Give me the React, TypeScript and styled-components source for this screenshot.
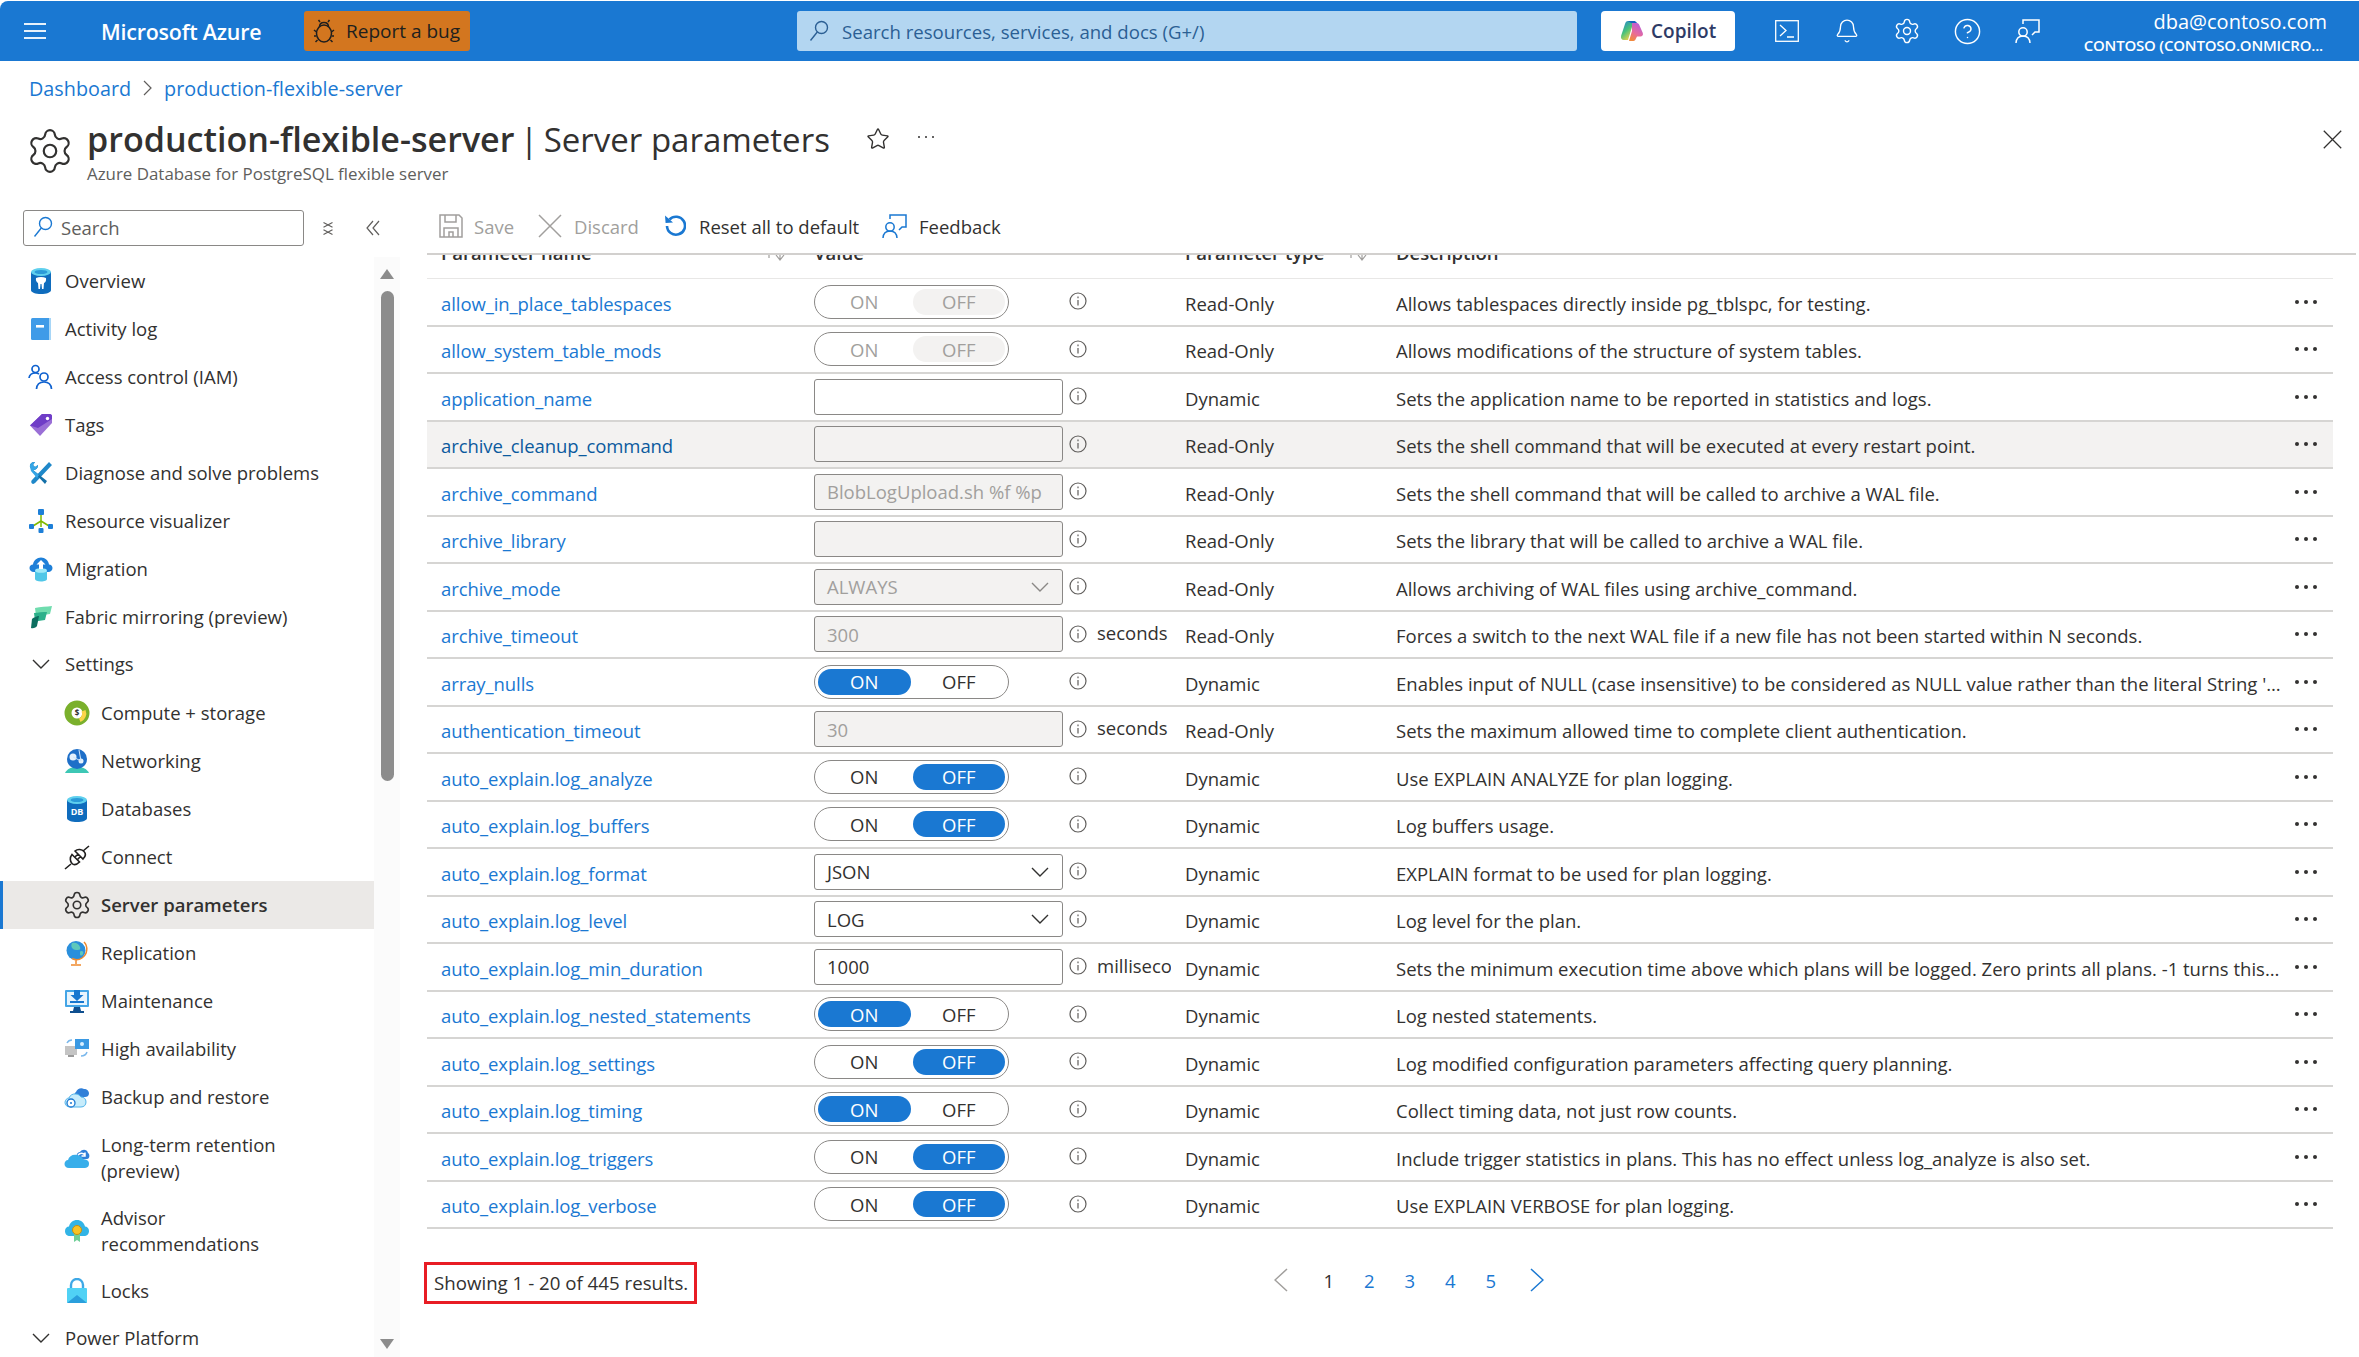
import React from "react";
import styled, { createGlobalStyle } from "styled-components";
import { Bell, CircleHelp, Settings, Star } from "lucide-react";

const FONT = `"Open Sans", "Noto Sans", sans-serif`;
const BLUE = "#1a78d2";

const GlobalStyle = createGlobalStyle`
  html, body { margin: 0; padding: 0; background: #fff; }
  body { font-family: ${FONT}; color: #323130; font-size: 18.5px; }
  * { box-sizing: border-box; }
`;

const Page = styled.div`
  width: 2359px;
  height: 1357px;
  overflow: hidden;
  display: flex;
  flex-direction: column;
  padding-top: 1px;
`;

/* top bar */
const TopBar = styled.header`
  height: 60px;
  flex: none;
  background: ${BLUE};
  border-top-left-radius: 8px;
  display: flex;
  align-items: center;
  color: #fff;
`;
const Hamburger = styled.div`
  width: 22px;
  margin-left: 24px;
  display: flex;
  flex-direction: column;
  gap: 5px;
  span { display: block; height: 2px; background: #fff; opacity: .9; }
`;
const Brand = styled.div`
  margin-left: 55px;
  width: 203px;
  font-size: 21.4px;
  font-weight: 600;
  letter-spacing: -0.2px;
`;
const BugButton = styled.div`
  width: 166px;
  height: 40px;
  background: #d3761f;
  border-radius: 3px;
  color: #201f1e;
  display: flex;
  align-items: center;
  gap: 11px;
  padding-left: 9px;
  font-size: 19px;
`;
const GlobalSearch = styled.div`
  margin-left: 327px;
  width: 780px;
  height: 40px;
  background: #b3d6f1;
  border-radius: 3px;
  display: flex;
  align-items: center;
  gap: 13px;
  padding-left: 12px;
  color: #2b5f94;
  font-size: 18.6px;
`;
const CopilotButton = styled.div`
  margin-left: 24px;
  width: 134px;
  height: 40px;
  border-radius: 4px;
  background: #fff;
  color: #2e3b66;
  display: flex;
  align-items: center;
  gap: 7px;
  padding-left: 19px;
  font-size: 19px;
  font-weight: 600;
`;
const TopIcons = styled.div`
  margin-left: 22px;
  display: flex;
  align-items: center;
`;
const TopIconCell = styled.div`
  width: 60px;
  display: flex;
  justify-content: center;
  svg { display: block; }
`;
const UserBox = styled.div`
  margin-left: auto;
  margin-right: 32px;
  padding-top: 2px;
  text-align: right;
  display: flex;
  flex-direction: column;
  gap: 1px;
`;
const UserMail = styled.div`
  font-size: 20px;
  line-height: 25px;
`;
const UserTenant = styled.div`
  font-size: 15px;
  font-weight: 600;
  line-height: 20px;
  letter-spacing: -0.2px;
  margin-right: 4px;
`;

/* breadcrumb + title */
const Breadcrumb = styled.nav`
  height: 54px;
  flex: none;
  display: flex;
  align-items: center;
  padding-left: 29px;
  color: ${BLUE};
  font-size: 19.8px;
  gap: 12px;
`;
const TitleRow = styled.div`
  height: 85px;
  flex: none;
  display: flex;
  padding-left: 25px;
  padding-top: 4px;
`;
const TitleGear = styled.div`
  margin-top: 7px;
  flex: none;
  svg { display: block; }
`;
const TitleBlock = styled.div`
  margin-left: 12px;
  display: flex;
  flex-direction: column;
`;
const TitleLine = styled.div`
  display: flex;
  align-items: center;
  height: 40px;
`;
const Title = styled.h1`
  margin: 0;
  font-size: 33px;
  font-weight: 400;
  line-height: 40px;
  color: #323130;
  word-spacing: -3px;
  b { font-weight: 600; font-size: 34.1px; word-spacing: 0; }
  span { word-spacing: 0; }
`;
const TitleStar = styled.span`
  margin-left: 36px;
  svg { display: block; }
`;
const TitleDots = styled.span`
  margin-left: 27px;
  margin-bottom: 4px;
  svg { display: block; }
`;
const Subtitle = styled.div`
  font-size: 16.900px;
  line-height: 24px;
  margin-top: 3px;
  color: #605e5c;
`;
const CloseIcon = styled.div`
  margin-left: auto;
  margin-right: 17px;
  margin-top: 10px;
`;

/* body */
const Body = styled.div`
  flex: 1;
  min-height: 0;
  display: flex;
`;
const Sidebar = styled.aside`
  width: 400px;
  flex: none;
  display: flex;
  flex-direction: column;
  padding-top: 10px;
`;
const SideSearchRow = styled.div`
  display: flex;
  align-items: center;
  padding-left: 23px;
  height: 36px;
  margin-bottom: 11px;
`;
const SideSearch = styled.div`
  width: 281px;
  height: 36px;
  border: 1px solid #8a8886;
  border-radius: 3px;
  display: flex;
  align-items: center;
  gap: 8px;
  padding-left: 9px;
  padding-bottom: 2px;
  color: #605e5c;
`;
const ClearMark = styled.span`
  margin-left: 19px;
  svg { display: block; }
`;
const CollapseMark = styled.span`
  margin-left: 33px;
  svg { display: block; }
`;
const SideColumns = styled.div`
  flex: 1;
  min-height: 0;
  display: flex;
`;
const NavList = styled.ul`
  list-style: none;
  margin: 0;
  padding: 0;
  width: 374px;
  flex: none;
`;
const NavItem = styled.li<{ $sub?: boolean; $active?: boolean; $tall?: boolean }>`
  min-height: ${(p) => (p.$tall ? 73 : 48)}px;
  display: flex;
  align-items: center;
  padding-left: ${(p) => (p.$sub ? 62 : 26)}px;
  background: ${(p) => (p.$active ? "#ebe9e7" : "transparent")};
  box-shadow: ${(p) => (p.$active ? `inset 3px 0 0 ${BLUE}` : "none")};
  font-weight: ${(p) => (p.$active ? 600 : 400)};
  line-height: 26px;
`;
const NavHead = styled(NavItem)`
  padding-bottom: 3px;
`;
const NavIcon = styled.span`
  width: 30px;
  height: 30px;
  flex: none;
  display: flex;
  align-items: center;
  justify-content: center;
  margin-right: 9px;
  svg { display: block; }
`;
const NavLabel = styled.span<{ $wrap?: boolean }>`
  max-width: ${(p) => (p.$wrap ? "210px" : "none")};
`;
const ScrollRail = styled.div`
  width: 26px;
  flex: none;
  background: #fbfbfb;
  display: flex;
  flex-direction: column;
  align-items: center;
  padding-top: 12px;
`;
const ScrollThumb = styled.div`
  width: 13px;
  height: 490px;
  margin-top: 12px;
  background: #8c8c8c;
  border-radius: 7px;
`;
const Arrow = styled.div<{ $down?: boolean }>`
  width: 0;
  height: 0;
  border-left: 7px solid transparent;
  border-right: 7px solid transparent;
  ${(p) => (p.$down ? "border-top: 10px solid #8c8c8c; margin-top: 558px;" : "border-bottom: 10px solid #8c8c8c;")}
`;

const Main = styled.main`
  flex: 1;
  min-width: 0;
  padding-left: 24px;
  display: flex;
  flex-direction: column;
`;
const Toolbar = styled.div`
  height: 55px;
  flex: none;
  margin: 0 3px;
  border-bottom: 2px solid #d2d0ce;
  display: flex;
  align-items: center;
  padding-left: 12px;
  padding-bottom: 1px;
`;
const ToolButton = styled.div<{ $disabled?: boolean; $gap: number; $width: number }>`
  display: flex;
  align-items: center;
  gap: ${(p) => p.$gap}px;
  width: ${(p) => p.$width}px;
  color: ${(p) => (p.$disabled ? "#a19f9d" : "#323130")};
  svg { display: block; flex: none; }
`;
const TableClip = styled.div`
  overflow: hidden;
  margin-left: 3px;
  width: 1906px;
  flex: none;
`;
const Row = styled.div<{ $hover?: boolean }>`
  display: grid;
  grid-template-columns: 387px 371px 211px 888px 49px;
  align-items: center;
  height: 47.5px;
  border-bottom: 2px solid #d6d5d3;
  background: ${(p) => (p.$hover ? "#f3f2f1" : "transparent")};
`;
const HeaderRow = styled(Row)`
  margin-top: -28px;
  height: 52px;
  border-bottom: 1px solid #e8e7e6;
  font-weight: 600;
`;
const HeadCell = styled.div<{ $pad?: number }>`
  display: flex;
  align-items: center;
  justify-content: space-between;
  padding-left: ${(p) => p.$pad ?? 0}px;
`;
const SortMarks = styled.span`
  display: flex;
  margin-right: 28px;
`;
const NameCell = styled.a<{ $hover?: boolean }>`
  padding-left: 14px;
  padding-top: 3px;
  color: ${(p) => (p.$hover ? "#0b5a9e" : BLUE)};
  white-space: nowrap;
  letter-spacing: -0.08px;
`;
const ValueCell = styled.div`
  display: flex;
  align-items: center;
`;
const ControlSlot = styled.div`
  width: 249px;
  flex: none;
`;
const Toggle = styled.div<{ $disabled?: boolean }>`
  width: 195px;
  height: 34px;
  border: 1px solid #8a8886;
  border-radius: 17px;
  display: grid;
  grid-template-columns: 1fr 1fr;
  gap: 2px;
  padding: 3px;
  color: ${(p) => (p.$disabled ? "#a19f9d" : "#323130")};
`;
const ToggleSide = styled.div<{ $selected?: boolean; $disabled?: boolean }>`
  border-radius: 13px;
  display: flex;
  align-items: center;
  justify-content: center;
  background: ${(p) => (!p.$selected ? "transparent" : p.$disabled ? "#f3f2f1" : BLUE)};
  color: ${(p) => (p.$selected && !p.$disabled ? "#fff" : "inherit")};
`;
const Field = styled.div<{ $disabled?: boolean }>`
  width: 249px;
  height: 36px;
  border: 1px solid #8a8886;
  border-radius: 3px;
  display: flex;
  align-items: center;
  justify-content: space-between;
  padding: 0 13px 0 12px;
  white-space: nowrap;
  overflow: hidden;
  background: ${(p) => (p.$disabled ? "#f3f2f1" : "#fff")};
  color: ${(p) => (p.$disabled ? "#a19f9d" : "#323130")};
`;
const InfoMark = styled.span`
  margin-left: 6px;
  margin-top: -1px;
  flex: none;
  svg { display: block; }
`;
const Unit = styled.span`
  margin-left: 10px;
  width: 74px;
  overflow: hidden;
  white-space: nowrap;
  margin-top: -3px;
`;
const TextCell = styled.div`
  padding-top: 3px;
  white-space: nowrap;
  overflow: hidden;
  text-overflow: ellipsis;
`;
const MoreCell = styled.div`
  display: flex;
  justify-content: center;
  padding-right: 5px;
  svg { display: block; }
`;
const Footer = styled.div`
  display: flex;
  align-items: center;
  margin-top: 33px;
`;
const ResultCount = styled.div`
  width: 273px;
  height: 42px;
  border: 3px solid #e81c24;
  display: flex;
  align-items: center;
  padding-left: 7px;
  padding-bottom: 2px;
  font-size: 18.7px;
  white-space: nowrap;
`;
const Pager = styled.div`
  margin-left: 576.500px;
  display: flex;
  align-items: center;
  margin-top: -6px;
  svg { display: block; }
`;
const PagerNext = styled.span`
  margin-left: 19px;
`;
const PageNum = styled.span<{ $current?: boolean }>`
  width: 40.5px;
  text-align: center;
  color: ${(p) => (p.$current ? "#323130" : BLUE)};
  &:nth-child(2) { margin-left: 21px; }
`;

/* icons */
const Glass = ({ color }: { color: string }) => (
  <svg width="20" height="22" viewBox="0 0 20 22" fill="none" stroke={color} strokeWidth="1.4">
    <circle cx="12.5" cy="7.5" r="6" />
    <path d="M8.3 12 1.5 20.5" />
  </svg>
);
const InfoIcon = () => (
  <svg width="18" height="18" viewBox="0 0 18 18" fill="none" stroke="#605e5c" strokeWidth="1.2">
    <circle cx="9" cy="9" r="8" />
    <path d="M9 8v5.5M9 4.6v1.6" />
  </svg>
);
const Chevron = ({ color = "#323130" }: { color?: string }) => (
  <svg width="18" height="10" viewBox="0 0 18 10" fill="none" stroke={color} strokeWidth="1.4">
    <path d="M1 1l8 8 8-8" />
  </svg>
);
const Cross = ({ size, color, sw = 1.4 }: { size: number; color: string; sw?: number }) => (
  <svg width={size} height={size} viewBox="0 0 24 24" fill="none" stroke={color} strokeWidth={sw}>
    <path d="M1 1l22 22M23 1 1 23" />
  </svg>
);
const FeedbackIcon = ({ color }: { color: string }) => (
  <svg width="25" height="25" viewBox="0 0 25 25" fill="none" strokeWidth="1.5" stroke={color}>
    <circle cx="8" cy="13" r="4.2" />
    <path d="M1 24c.3-4.500 3-7 7-7s6.700 2.500 7 7" />
    <path d="M8 5V1h16v12h-4l-3 3" />
  </svg>
);
const BugIcon = () => (
  <svg width="22" height="24" viewBox="0 0 22 24" fill="none" stroke="#201f1e" strokeWidth="1.5">
    <ellipse cx="11" cy="14.500" rx="7.500" ry="8.500" />
    <path d="M6.500 8c0-3 2-4.500 4.500-4.500S15.500 5 15.500 8M7 3 5.500 1M15 3l1.500-2M3.500 13 1 11M18.500 13 21 11M3 17H1M19 17h2M4.500 21 2.500 23M17.500 21l2 2" />
  </svg>
);
const CopilotLogo = () => (
  <svg width="24" height="22" viewBox="0 0 24 22">
    <defs>
      <linearGradient id="cpA" x1="0" y1="0" x2="0.6" y2="1">
        <stop offset="0" stopColor="#1d7fd8" />
        <stop offset=".55" stopColor="#49c27a" />
        <stop offset="1" stopColor="#f3d34a" />
      </linearGradient>
      <linearGradient id="cpB" x1="0.8" y1="0" x2="0.3" y2="1">
        <stop offset="0" stopColor="#b35de0" />
        <stop offset=".6" stopColor="#e86a9a" />
        <stop offset="1" stopColor="#f28a3c" />
      </linearGradient>
    </defs>
    <path d="M8 1h6l-2 6-4 13H4C1.500 20 .5 18 1.200 15.500L5 4c.5-2 1.500-3 3-3z" fill="url(#cpA)" />
    <path d="M12 3h5c1 0 2 1 2.300 2l3.500 8c.7 2-.5 3.500-2.500 3.500H17l-1.500 3c-.6 1.300-1.500 1.500-3 1.500H9l3-10z" fill="url(#cpB)" />
    <path d="M8 1h6c1 0 2 .5 3 2h-6z" fill="#1565c0" />
  </svg>
);
const TerminalIcon = () => (
  <svg width="24" height="22" viewBox="0 0 24 22" fill="none" stroke="#fff" strokeWidth="1.3">
    <rect x=".7" y=".7" width="22.600" height="20.600" />
    <path d="M5 5l6 5.500L5 16M12 17h7" />
  </svg>
);

const Cyl = ({ children }: { children?: React.ReactNode }) => (
  <svg width="26" height="28" viewBox="0 0 26 28">
    <path d="M3 5v18c0 2.500 4.500 4 10 4s10-1.500 10-4V5z" fill="#0f6cbd" />
    <ellipse cx="13" cy="5" rx="10" ry="4" fill="#5fd0ee" />
    <ellipse cx="13" cy="5" rx="6.500" ry="2" fill="#2b9bd8" />
    {children}
  </svg>
);

const sideIcons: Record<string, React.ReactNode> = {
  overview: (
    <Cyl>
      <path d="M8 11c3-1.500 7-1.500 10 0 .5 3-.8 4.500-2 5l-.5 6h-1.500l-.5-5h-1l-.5 5h-1.500l-.5-6c-1.500-1-2.500-2.500-2-5z" fill="#fff" />
    </Cyl>
  ),
  activity: (
    <svg width="22" height="24" viewBox="0 0 22 24">
      <rect x="1" y="1" width="20" height="22" rx="1.500" fill="#3f9be8" />
      <path d="M19 1h2v22h-2z" fill="#a7d6f7" />
      <rect x="6" y="8" width="8" height="2.600" fill="#fff" />
    </svg>
  ),
  access: (
    <svg width="26" height="26" viewBox="0 0 26 26" fill="none" stroke="#1062cf" strokeWidth="1.7">
      <circle cx="7.500" cy="5" r="3.500" />
      <path d="M1 14c.5-3.500 3-5 6.500-5 1.500 0 2.500.3 3.500 1" />
      <circle cx="16" cy="13" r="4" />
      <path d="M8.500 25c.3-4.500 3-7 7.500-7s7.200 2.500 7.500 7" />
    </svg>
  ),
  tags: (
    <svg width="24" height="24" viewBox="0 0 24 24">
      <path d="M13 1h8c1 0 2 1 2 2v7L11 23 1 12.500z" fill="#9a6fd6" />
      <path d="M13 1h8c1 0 2 1 2 2v3L9 15 1 12.500z" fill="#6f3dc7" />
      <circle cx="18.500" cy="5.500" r="1.700" fill="#fff" />
    </svg>
  ),
  diagnose: (
    <svg width="24" height="24" viewBox="0 0 24 24">
      <path d="M20 1 23 4 7 21c-1 1.500-3 2.500-4 1.500s-1-2.500 0-3.500z" fill="#1f88c9" />
      <path d="M1 6c-.5-3 1.500-5 5-5L4 4l2 2 3-2c0 3.500-2 5-5 5l14 11-2 3L3 9z" fill="#1470a8" />
      <path d="M1 6c-.5-3 1.500-5 5-5L4 4l2 2 3-2c0 3.500-2 5-5 5l6 5-2 3-6-7z" fill="#35a5e5" />
    </svg>
  ),
  visualizer: (
    <svg width="26" height="26" viewBox="0 0 26 26">
      <path d="M13 6v13M13 13l-8 5M13 13l8 5" stroke="#7fba00" strokeWidth="1.500" fill="none" />
      <rect x="10" y="1" width="6" height="6" rx="1" fill="#1d7fd8" />
      <rect x="1" y="16" width="5" height="5" rx="1" fill="#1d7fd8" />
      <rect x="20" y="16" width="5" height="5" rx="1" fill="#1d7fd8" />
      <rect x="10.500" y="20" width="5" height="5" rx="1" fill="#1d7fd8" />
    </svg>
  ),
  migration: (
    <svg width="24" height="26" viewBox="0 0 24 26">
      <path d="M5 16C2 16 .5 14 .5 12S2 8.500 4 8.500C4.500 4.500 8 1.500 12 1.500s7.500 3 8 7c2 0 3.500 1.700 3.500 3.500s-1.500 4-4.500 4z" fill="#1d7fd8" />
      <path d="M6 15v8c0 1.500 2.500 2.500 6 2.500s6-1 6-2.500v-8z" fill="#50c7e8" />
      <ellipse cx="12" cy="14.500" rx="6" ry="2.300" fill="#9eeaf9" />
      <path d="M12 4l4.500 4.500H14V13h-4V8.500H7.500z" fill="#fff" />
    </svg>
  ),
  fabric: (
    <svg width="24" height="24" viewBox="0 0 24 24">
      <path d="M6 3c5-1 12-1.500 17-2l-2 8-14 2z" fill="#6fdcae" />
      <path d="M5 8c4-.5 9-1 13-1l-2 8-10 1.500z" fill="#2bb08a" />
      <path d="M3 14c1-1 5-3 7-3l-2 10c-.5 1.500-4 3-6 2z" fill="#0c6e5f" />
    </svg>
  ),
  compute: (
    <svg width="26" height="26" viewBox="0 0 26 26">
      <circle cx="13" cy="13" r="9" fill="#fff" stroke="#7ab02c" strokeWidth="7" />
      <path d="M21.500 10a9 9 0 0 1-5 12l-1.500-3.500a5 5 0 0 0 2.500-7z" fill="#fbd54a" />
      <text x="13" y="16" fontSize="8" fontWeight="700" textAnchor="middle" fill="#323130" fontFamily={FONT}>$</text>
    </svg>
  ),
  networking: (
    <svg width="26" height="26" viewBox="0 0 26 26">
      <path d="M1 25c2-4 6-6 12-6s10 2 12 6z" fill="#3dc7b5" />
      <circle cx="13" cy="11" r="10" fill="#1e6fc8" />
      <circle cx="9" cy="9" r="3.500" fill="#e4f1fc" />
      <circle cx="17" cy="13" r="2.500" fill="#e4f1fc" />
      <path d="M9 9l8 4M15 2l2 11" stroke="#cfe6fa" strokeWidth="1" />
    </svg>
  ),
  databases: (
    <Cyl>
      <text x="13" y="20" fontSize="9" fontWeight="700" textAnchor="middle" fill="#fff" fontFamily={FONT}>DB</text>
    </Cyl>
  ),
  connect: (
    <svg width="26" height="26" viewBox="0 0 26 26" fill="none" stroke="#201f1e" strokeWidth="1.600">
      <path d="M1 25l6-5M19 7l6-5" />
      <path d="M8 10.500l7.500 7.500c-2.500 2.500-5.500 3.500-7.500 1.500s-2.500-6 0-9z" />
      <path d="M11 7l8 8c2.500-2.500 3-5.500 1-7.500S14 4.500 11 7zM11 13l3-3M13.500 15.500l3-3" />
    </svg>
  ),
  replication: (
    <svg width="26" height="26" viewBox="0 0 26 26">
      <circle cx="12" cy="10.500" r="9.500" fill="#2a8fdc" />
      <path d="M8 3c4-1 7 1 8 4s-1 3-4 3-6-3-4-7zM17 11c2 0 3 1 2 3s-3 2-3 0 0-3 1-3z" fill="#5ec8bb" />
      <path d="M20 2c4 4 4 12-2 16-3 2-7 2-10 .5M12 20v4M7 25h10" fill="none" stroke="#f08a2e" strokeWidth="1.500" />
    </svg>
  ),
  maintenance: (
    <svg width="26" height="26" viewBox="0 0 26 26">
      <rect x="1" y="2" width="24" height="17" rx="1" fill="#44a5e6" />
      <rect x="3" y="4" width="20" height="13" fill="#e7f4fd" />
      <path d="M10 2h6v5h3.500L13 13 6.500 7H10z" fill="#1877cf" />
      <path d="M6 13h14v2H6z" fill="#1877cf" />
      <path d="M10 19h6l1 4h3v2H6v-2h3z" fill="#0f4f8f" />
    </svg>
  ),
  ha: (
    <svg width="26" height="24" viewBox="0 0 26 24">
      <rect x="1" y="9" width="12" height="9" fill="#c4c4c4" />
      <rect x="11" y="2" width="14" height="10" fill="#3a99e3" />
      <circle cx="18" cy="7" r="2" fill="#d9f0ff" />
      <path d="M3 6c1-2 3-3 5-3M23 15c-1 3-3 4-6 4" fill="none" stroke="#7ab8ec" strokeWidth="1.500" />
      <path d="M4 18h6v2H4z" fill="#9a9a9a" />
    </svg>
  ),
  backup: (
    <svg width="26" height="24" viewBox="0 0 26 24">
      <path d="M12 12c-2-.5-2-4 0-5 1-3 5-5 8-3 3 0 5 2 5 4.500S23 12 21 12z" fill="#2f7fd8" />
      <path d="M6 22c-3 0-5-2-5-4.500S3 13 5 13c1-3 4-4.500 7-4 2 0 4 1.500 5 3 3 0 5 2 5 5s-2 5-5 5z" fill="#c7ecfb" stroke="#52b4ea" strokeWidth="1" />
      <circle cx="7" cy="18" r="4" fill="#fff" stroke="#1b78d2" strokeWidth="1.300" />
      <circle cx="7" cy="18" r="1" fill="#1b78d2" />
    </svg>
  ),
  longterm: (
    <svg width="26" height="24" viewBox="0 0 26 24">
      <path d="M15 13c-3 0-4-6 1-7 2-3 7-3 8 1 2 1 2 6-1 6z" fill="#2f7fd8" />
      <path d="M5 22c-3 0-4.500-2-4.500-4S2 14 4 14c1-4 5-6 9-5 2 0 5 2 6 4 3 .5 6 1 6 4.500s-2 4.500-5 4.500z" fill="#38aeea" />
      <path d="M14 9c2-2.500 5-2.500 7 0M21 6.500V10h-3.500" fill="none" stroke="#fff" strokeWidth="1.500" />
    </svg>
  ),
  advisor: (
    <svg width="26" height="26" viewBox="0 0 26 26">
      <path d="M6 18c-3 0-5-2-5-5s2-4.500 4-4.500C6 4.500 9 2 13 2s7 2.500 8 6.500c2 0 4 1.500 4 4.500s-2 5-5 5z" fill="#32b4e6" />
      <path d="M10 15h6v9l-3-2-3 2z" fill="#6fcf97" />
      <circle cx="13" cy="12" r="4.500" fill="#f7c325" stroke="#c78f10" strokeWidth="1" />
    </svg>
  ),
  locks: (
    <svg width="24" height="26" viewBox="0 0 24 26">
      <path d="M6 11V7a6 6 0 0 1 12 0v4" fill="none" stroke="#3ea8e6" strokeWidth="2.400" />
      <rect x="2" y="10" width="20" height="15" rx="1" fill="#50d2f5" />
      <path d="M2 25l10-8 10 8z" fill="#2a9fdc" />
    </svg>
  ),
};

type NavEntry = { label: string; icon?: string; sub?: boolean; active?: boolean; tall?: boolean; head?: boolean; gear?: boolean };

const navEntries: NavEntry[] = [
  { label: "Overview", icon: "overview" },
  { label: "Activity log", icon: "activity" },
  { label: "Access control (IAM)", icon: "access" },
  { label: "Tags", icon: "tags" },
  { label: "Diagnose and solve problems", icon: "diagnose" },
  { label: "Resource visualizer", icon: "visualizer" },
  { label: "Migration", icon: "migration" },
  { label: "Fabric mirroring (preview)", icon: "fabric" },
  { label: "Settings", head: true },
  { label: "Compute + storage", icon: "compute", sub: true },
  { label: "Networking", icon: "networking", sub: true },
  { label: "Databases", icon: "databases", sub: true },
  { label: "Connect", icon: "connect", sub: true },
  { label: "Server parameters", gear: true, sub: true, active: true },
  { label: "Replication", icon: "replication", sub: true },
  { label: "Maintenance", icon: "maintenance", sub: true },
  { label: "High availability", icon: "ha", sub: true },
  { label: "Backup and restore", icon: "backup", sub: true },
  { label: "Long-term retention (preview)", icon: "longterm", sub: true, tall: true },
  { label: "Advisor recommendations", icon: "advisor", sub: true, tall: true },
  { label: "Locks", icon: "locks", sub: true },
  { label: "Power Platform", head: true },
];

type Param = {
  name: string;
  kind: "toggle" | "text" | "select";
  value?: string;
  on?: boolean;
  readOnly?: boolean;
  unit?: string;
  desc: string;
  hover?: boolean;
};

const params: Param[] = [
  { name: "allow_in_place_tablespaces", kind: "toggle", readOnly: true, desc: "Allows tablespaces directly inside pg_tblspc, for testing." },
  { name: "allow_system_table_mods", kind: "toggle", readOnly: true, desc: "Allows modifications of the structure of system tables." },
  { name: "application_name", kind: "text", desc: "Sets the application name to be reported in statistics and logs." },
  { name: "archive_cleanup_command", kind: "text", readOnly: true, hover: true, desc: "Sets the shell command that will be executed at every restart point." },
  { name: "archive_command", kind: "text", readOnly: true, value: "BlobLogUpload.sh %f %p", desc: "Sets the shell command that will be called to archive a WAL file." },
  { name: "archive_library", kind: "text", readOnly: true, desc: "Sets the library that will be called to archive a WAL file." },
  { name: "archive_mode", kind: "select", readOnly: true, value: "ALWAYS", desc: "Allows archiving of WAL files using archive_command." },
  { name: "archive_timeout", kind: "text", readOnly: true, value: "300", unit: "seconds", desc: "Forces a switch to the next WAL file if a new file has not been started within N seconds." },
  { name: "array_nulls", kind: "toggle", on: true, desc: "Enables input of NULL (case insensitive) to be considered as NULL value rather than the literal String 'NULL'." },
  { name: "authentication_timeout", kind: "text", readOnly: true, value: "30", unit: "seconds", desc: "Sets the maximum allowed time to complete client authentication." },
  { name: "auto_explain.log_analyze", kind: "toggle", desc: "Use EXPLAIN ANALYZE for plan logging." },
  { name: "auto_explain.log_buffers", kind: "toggle", desc: "Log buffers usage." },
  { name: "auto_explain.log_format", kind: "select", value: "JSON", desc: "EXPLAIN format to be used for plan logging." },
  { name: "auto_explain.log_level", kind: "select", value: "LOG", desc: "Log level for the plan." },
  { name: "auto_explain.log_min_duration", kind: "text", value: "1000", unit: "milliseco", desc: "Sets the minimum execution time above which plans will be logged. Zero prints all plans. -1 turns this feature off." },
  { name: "auto_explain.log_nested_statements", kind: "toggle", on: true, desc: "Log nested statements." },
  { name: "auto_explain.log_settings", kind: "toggle", desc: "Log modified configuration parameters affecting query planning." },
  { name: "auto_explain.log_timing", kind: "toggle", on: true, desc: "Collect timing data, not just row counts." },
  { name: "auto_explain.log_triggers", kind: "toggle", desc: "Include trigger statistics in plans. This has no effect unless log_analyze is also set." },
  { name: "auto_explain.log_verbose", kind: "toggle", desc: "Use EXPLAIN VERBOSE for plan logging." },
];

const SortIcon = () => (
  <SortMarks>
    <svg width="20" height="20" viewBox="0 0 20 20" fill="none" stroke="#a19f9d" strokeWidth="1.200">
      <path d="M3 1v14M.5 5 3 1l2.500 4M14 1v16M10 12l4 5 4-5" />
    </svg>
  </SortMarks>
);

const ParamRow = ({ p }: { p: Param }) => (
  <Row $hover={p.hover}>
    <NameCell $hover={p.hover}>{p.name}</NameCell>
    <ValueCell>
      <ControlSlot>
        {p.kind === "toggle" && (
          <Toggle $disabled={p.readOnly}>
            <ToggleSide $selected={!!p.on} $disabled={p.readOnly}>ON</ToggleSide>
            <ToggleSide $selected={!p.on} $disabled={p.readOnly}>OFF</ToggleSide>
          </Toggle>
        )}
        {p.kind === "text" && <Field $disabled={p.readOnly}>{p.value}</Field>}
        {p.kind === "select" && (
          <Field $disabled={p.readOnly}>
            {p.value}
            <Chevron color={p.readOnly ? "#8a8886" : "#323130"} />
          </Field>
        )}
      </ControlSlot>
      <InfoMark><InfoIcon /></InfoMark>
      {p.unit && <Unit>{p.unit}</Unit>}
    </ValueCell>
    <TextCell>{p.readOnly ? "Read-Only" : "Dynamic"}</TextCell>
    <TextCell>{p.desc}</TextCell>
    <MoreCell>
      <svg width="24" height="6" viewBox="0 0 24 6" fill="#323130">
        <circle cx="3" cy="3" r="2" />
        <circle cx="12" cy="3" r="2" />
        <circle cx="21" cy="3" r="2" />
      </svg>
    </MoreCell>
  </Row>
);

const App: React.FC = () => (
  <Page>
    <GlobalStyle />
    <TopBar>
      <Hamburger><span /><span /><span /></Hamburger>
      <Brand>Microsoft Azure</Brand>
      <BugButton><BugIcon />Report a bug</BugButton>
      <GlobalSearch><Glass color="#2b5f94" />Search resources, services, and docs (G+/)</GlobalSearch>
      <CopilotButton><CopilotLogo />Copilot</CopilotButton>
      <TopIcons>
        <TopIconCell><TerminalIcon /></TopIconCell>
        <TopIconCell><Bell size={26} strokeWidth={1.2} color="#fff" /></TopIconCell>
        <TopIconCell><Settings size={28} strokeWidth={1.2} color="#fff" /></TopIconCell>
        <TopIconCell><CircleHelp size={29} strokeWidth={1.2} color="#fff" /></TopIconCell>
        <TopIconCell><FeedbackIcon color="#fff" /></TopIconCell>
      </TopIcons>
      <UserBox>
        <UserMail>dba@contoso.com</UserMail>
        <UserTenant>CONTOSO (CONTOSO.ONMICRO...</UserTenant>
      </UserBox>
    </TopBar>

    <Breadcrumb>
      <span>Dashboard</span>
      <svg width="9" height="16" viewBox="0 0 9 16" fill="none" stroke="#605e5c" strokeWidth="1.200">
        <path d="M1 1l7 7-7 7" />
      </svg>
      <span>production-flexible-server</span>
    </Breadcrumb>

    <TitleRow>
      <TitleGear><Settings size={50} strokeWidth={1.05} color="#323130" /></TitleGear>
      <TitleBlock>
        <TitleLine>
          <Title><b>production-flexible-server</b> | <span>Server parameters</span></Title>
          <TitleStar><Star size={24} strokeWidth={1.4} color="#323130" /></TitleStar>
          <TitleDots>
            <svg width="18" height="4" viewBox="0 0 18 4" fill="#323130">
              <circle cx="2" cy="2" r="1" />
              <circle cx="9" cy="2" r="1" />
              <circle cx="16" cy="2" r="1" />
            </svg>
          </TitleDots>
        </TitleLine>
        <Subtitle>Azure Database for PostgreSQL flexible server</Subtitle>
      </TitleBlock>
      <CloseIcon><Cross size={19} color="#323130" sw={1.6} /></CloseIcon>
    </TitleRow>

    <Body>
      <Sidebar>
        <SideSearchRow>
          <SideSearch><Glass color="#1a78d2" />Search</SideSearch>
          <ClearMark>
            <svg width="10" height="13" viewBox="0 0 10 13" fill="none" stroke="#605e5c" strokeWidth="1.100">
              <path d="M.5.500l9 4.800M9.500.500l-9 4.800M.5 12.500l9-4.800M9.500 12.500l-9-4.800" />
            </svg>
          </ClearMark>
          <CollapseMark>
            <svg width="14" height="16" viewBox="0 0 14 16" fill="none" stroke="#605e5c" strokeWidth="1.200">
              <path d="M7 1 1 8l6 7M13 1 7 8l6 7" />
            </svg>
          </CollapseMark>
        </SideSearchRow>
        <SideColumns>
          <NavList>
            {navEntries.map((n) => {
              const Item = n.head ? NavHead : NavItem;
              return (
                <Item key={n.label} $sub={n.sub} $active={n.active} $tall={n.tall}>
                  <NavIcon>
                    {n.head && <Chevron />}
                    {n.gear && <Settings size={30} strokeWidth={1.3} color="#323130" />}
                    {n.icon && sideIcons[n.icon]}
                  </NavIcon>
                  <NavLabel $wrap={n.tall}>{n.label}</NavLabel>
                </Item>
              );
            })}
          </NavList>
          <ScrollRail>
            <Arrow />
            <ScrollThumb />
            <Arrow $down />
          </ScrollRail>
        </SideColumns>
      </Sidebar>

      <Main>
        <Toolbar>
          <ToolButton $disabled $gap={11} $width={99}>
            <svg width="24" height="24" viewBox="0 0 24 24" fill="none" stroke="#a19f9d" strokeWidth="1.500">
              <path d="M1 1h19l3 3v19H1zM6 1v7h11V1M5 23v-9h14v9M10 23v-5h4v5" />
            </svg>
            Save
          </ToolButton>
          <ToolButton $disabled $gap={12} $width={126}>
            <Cross size={24} color="#a19f9d" sw={1.500} />
            Discard
          </ToolButton>
          <ToolButton $gap={13} $width={218}>
            <svg width="22" height="24" viewBox="0 0 22 24" fill="none" stroke="#1a78d2" strokeWidth="2.600">
              <path d="M5.500 5.500A9 9 0 1 1 3 12" />
              <path d="M1 1.500 1.600 9l7.400-.6z" fill="#1a78d2" stroke="none" />
            </svg>
            Reset all to default
          </ToolButton>
          <ToolButton $gap={12} $width={140}>
            <FeedbackIcon color="#1a78d2" />
            Feedback
          </ToolButton>
        </Toolbar>

        <TableClip>
          <HeaderRow>
            <HeadCell $pad={14}>Parameter name<SortIcon /></HeadCell>
            <HeadCell>Value</HeadCell>
            <HeadCell>Parameter type<SortIcon /></HeadCell>
            <HeadCell>Description</HeadCell>
            <div />
          </HeaderRow>
          {params.map((p) => <ParamRow key={p.name} p={p} />)}
        </TableClip>

        <Footer>
          <ResultCount>Showing 1 - 20 of 445 results.</ResultCount>
          <Pager>
            <svg width="14" height="24" viewBox="0 0 14 24" fill="none" stroke="#a19f9d" strokeWidth="1.500"><path d="M13 1 1 12l12 11" /></svg>
            <PageNum $current>1</PageNum>
            <PageNum>2</PageNum>
            <PageNum>3</PageNum>
            <PageNum>4</PageNum>
            <PageNum>5</PageNum>
            <PagerNext>
              <svg width="14" height="24" viewBox="0 0 14 24" fill="none" stroke="#1a78d2" strokeWidth="1.500"><path d="M1 1l12 11L1 23" /></svg>
            </PagerNext>
          </Pager>
        </Footer>
      </Main>
    </Body>
  </Page>
);

export default App;
